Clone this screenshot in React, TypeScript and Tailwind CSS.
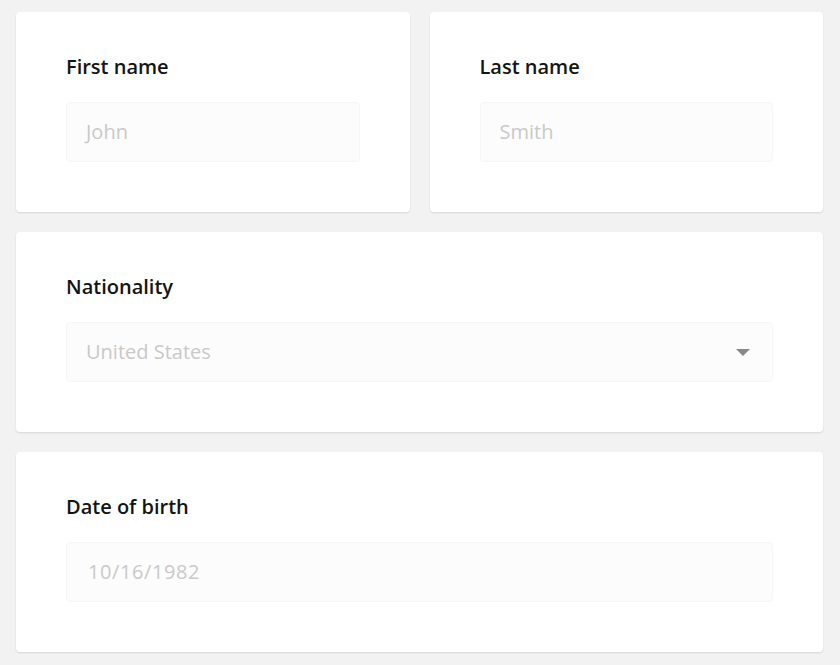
export default function App() {
  const font = { fontFamily: '"Open Sans", "Noto Sans", sans-serif' };

  return (
    <main className="min-h-screen bg-[#f2f2f2] pt-3 pr-[17px] pb-3 pl-4" style={font}>
      <div className="grid grid-cols-2 gap-5">
        <section className="rounded bg-white px-[50px] pt-10 pb-[50px] shadow-[0_1px_2px_rgba(0,0,0,0.12)]">
          <label className="block text-[20px] leading-[30px] font-semibold text-[#141414]">First name</label>
          <div className="mt-5 flex h-[60px] items-center rounded border border-[#f6f6f6] bg-[#fcfcfc] px-[19px] text-[20px] text-[#c9c9c9]">John</div>
        </section>
        <section className="rounded bg-white px-[50px] pt-10 pb-[50px] shadow-[0_1px_2px_rgba(0,0,0,0.12)]">
          <label className="block text-[20px] leading-[30px] font-semibold text-[#141414]">Last name</label>
          <div className="mt-5 flex h-[60px] items-center rounded border border-[#f6f6f6] bg-[#fcfcfc] px-[19px] text-[20px] text-[#c9c9c9]">Smith</div>
        </section>
      </div>

      <section className="mt-5 rounded bg-white px-[50px] pt-10 pb-[50px] shadow-[0_1px_2px_rgba(0,0,0,0.12)]">
        <label className="block text-[20px] leading-[30px] font-semibold text-[#141414]">Nationality</label>
        <div className="mt-5 flex h-[60px] items-center justify-between rounded border border-[#f6f6f6] bg-[#fcfcfc] pr-[22px] pl-[19px] text-[20px] text-[#c9c9c9]">
          <span>United States</span>
          <svg width="14" height="7" viewBox="0 0 14 7">
            <path d="M0 0 L14 0 L7 7 Z" fill="#888888" />
          </svg>
        </div>
      </section>

      <section className="mt-5 rounded bg-white px-[50px] pt-10 pb-[50px] shadow-[0_1px_2px_rgba(0,0,0,0.12)]">
        <label className="block text-[20px] leading-[30px] font-semibold text-[#141414]">Date of birth</label>
        <div className="mt-5 flex h-[60px] items-center rounded border border-[#f6f6f6] bg-[#fcfcfc] px-[19px] text-[20px] tracking-[0.6px] text-[#c9c9c9]">
          <span className="pl-[2px]">10/16/1982</span>
        </div>
      </section>
    </main>
  );
}
